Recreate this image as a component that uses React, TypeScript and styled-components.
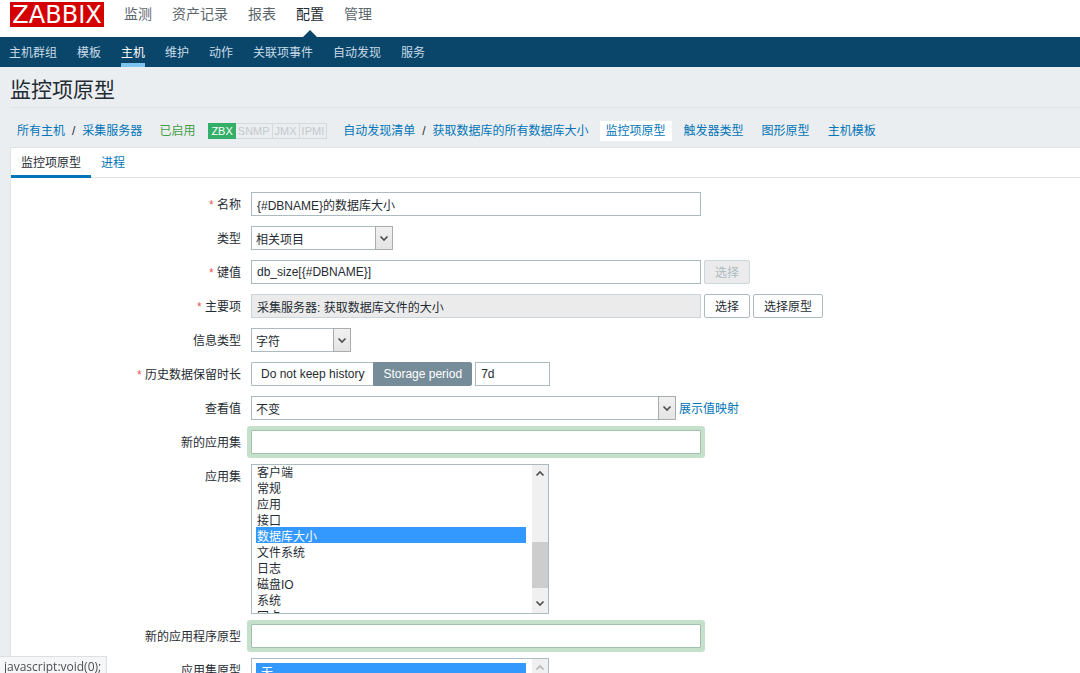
import React, { useEffect, useRef } from "react";
import styled, { createGlobalStyle, css } from "styled-components";

const GlobalStyle = createGlobalStyle`
  *, *::before, *::after { box-sizing: border-box; }
  html, body { margin: 0; height: 100%; overflow: hidden; }
  body {
    background: #ebeef0;
    color: #1f2c33;
    font-family: "Liberation Sans", Arial, "Noto Sans CJK SC", sans-serif;
    font-size: 12px;
    line-height: 16px;
  }
  input, select, button { font: inherit; color: inherit; margin: 0; }
  a { color: #0275b8; text-decoration: none; }
`;

const TopBar = styled.header`
  display: flex;
  align-items: flex-start;
  gap: 20px;
  height: 37px;
  padding: 2px 10px 0;
  background: #fff;
`;

const Logo = styled.a`
  width: 94px;
  height: 25px;
  background: #d40000;
  color: #fff;
  font-family: "DejaVu Sans", sans-serif;
  font-size: 24px;
  line-height: 26px;
  text-align: center;
`;

const MainMenu = styled.nav`
  display: flex;
  gap: 20px;
  height: 35px;
`;

const MainLink = styled.a<{ $active?: boolean }>`
  position: relative;
  color: ${(p) => (p.$active ? "#1f2c33" : "#5b666d")};
  font-size: 14px;
  line-height: 25px;
  ${(p) =>
    p.$active &&
    css`
      &::after {
        content: "";
        position: absolute;
        bottom: 0;
        left: 50%;
        margin-left: -7px;
        border: 7px solid transparent;
        border-top: 0;
        border-bottom-color: #0a466a;
      }
    `}
`;

const SubMenu = styled.nav`
  display: flex;
  gap: 20px;
  height: 30px;
  padding: 0 9px;
  background: #0a466a;
`;

const SubLink = styled.a<{ $active?: boolean }>`
  height: 30px;
  line-height: 32px;
  color: ${(p) => (p.$active ? "#fff" : "#c6dbe7")};
  border-bottom: 4px solid ${(p) => (p.$active ? "#7cc4ec" : "transparent")};
`;

const PageTitle = styled.h1`
  margin: 0 0 0 10px;
  height: 41px;
  border-bottom: 1px solid #dfe4e7;
  font-size: 21px;
  font-weight: 400;
  line-height: 46px;
`;

const Crumbs = styled.nav`
  display: flex;
  align-items: center;
  height: 39px;
  padding: 7px 10px 0 17px;
  white-space: nowrap;
`;

const CrumbGroup = styled.span`
  display: flex;
  gap: 7px;
  margin-right: 17px;
`;

const Enabled = styled.span`
  margin-right: 13px;
  color: #429e47;
`;

const Badges = styled.span`
  display: flex;
  margin-right: 16px;
`;

const Badge = styled.span<{ $on?: boolean }>`
  height: 16px;
  padding: 0 2px;
  border: 1px solid ${(p) => (p.$on ? "#34af67" : "#d3d9dc")};
  border-left-width: ${(p) => (p.$on ? "1px" : "0")};
  background: ${(p) => (p.$on ? "#34af67" : "transparent")};
  color: ${(p) => (p.$on ? "#fff" : "#c3cacf")};
  font-size: 11px;
  line-height: 15px;
`;

const Section = styled.a<{ $active?: boolean }>`
  margin-left: ${(p) => (p.$active ? "-6px" : "6px")};
  padding: 2px 6px;
  background: ${(p) => (p.$active ? "#fff" : "transparent")};
`;

const Panel = styled.main`
  margin-left: 10px;
  background: #fff;
  border: 1px solid #dfe4e7;
  border-right: 0;
`;

const Tabs = styled.div`
  display: flex;
  height: 30px;
  border-bottom: 1px solid #dfe4e7;
`;

const Tab = styled.button<{ $active?: boolean }>`
  height: 30px;
  padding: 2px 10px 0;
  border: 0;
  border-bottom: 3px solid ${(p) => (p.$active ? "#0275b8" : "transparent")};
  background: none;
  color: ${(p) => (p.$active ? "#1f2c33" : "#0275b8")};
`;

const Form = styled.form`
  display: grid;
  grid-template-columns: 230px 1fr;
  gap: 10px;
  padding: 14px 0 40px;
`;

const Label = styled.label<{ $required?: boolean }>`
  height: 24px;
  line-height: 26px;
  text-align: right;
  ${(p) =>
    p.$required &&
    css`
      &::before {
        content: "* ";
        color: #e45959;
      }
    `}
`;

const Field = styled.div`
  display: flex;
  align-items: flex-start;
  gap: 3px;
`;

const TextInput = styled.input<{ $width?: number; $fresh?: boolean }>`
  width: ${(p) => p.$width ?? 450}px;
  max-width: 100%;
  height: 24px;
  padding: 0 5px;
  border: 1px solid ${(p) => (p.$fresh ? "#a3bfae" : "#acbbc2")};
  background: #fff;
  outline: 0;
  ${(p) => p.$fresh && css`box-shadow: 0 0 0 4px #c5e1cb; border-radius: 1px;`}
  &:read-only {
    background: #ebebeb;
    border-color: #ccd5d9;
  }
`;

const Button = styled.button`
  height: 24px;
  padding: 2px 10px 0;
  border: 1px solid #acbbc2;
  border-radius: 2px;
  background: #fff;
  &:disabled {
    background: #ebebeb;
    border-color: #ccd5d9;
    color: #acbbc2;
  }
`;

const SelectBox = styled.span<{ $width: number }>`
  position: relative;
  width: ${(p) => p.$width}px;
  height: 24px;
  select {
    appearance: none;
    width: 100%;
    height: 24px;
    padding: 3px 20px 0 4px;
    border: 1px solid #acbbc2;
    border-radius: 0;
    background: #fff;
  }
`;

const DropArrow = styled.span`
  position: absolute;
  top: 0;
  right: 0;
  display: grid;
  place-items: center;
  width: 18px;
  height: 24px;
  border: 1px solid #a9adb0;
  background: linear-gradient(#f1f1f1, #e4e4e4);
  pointer-events: none;
`;

const Segments = styled.div`
  display: flex;
  label {
    height: 24px;
    padding: 0 9px;
    border: 1px solid #acbbc2;
    background: #fff;
    line-height: 22px;
    cursor: pointer;
  }
  input {
    position: absolute;
    opacity: 0;
  }
  label:first-of-type { border-right: 0; border-radius: 2px 0 0 2px; }
  label:last-of-type { border-radius: 0 2px 2px 0; }
  input:checked + label {
    background: #768d99;
    border-color: #768d99;
    color: #fff;
  }
`;

const MappingLink = styled.a`
  height: 24px;
  line-height: 26px;
`;

const ListFrame = styled.div`
  display: flex;
  width: 298px;
  height: 150px;
  border: 1px solid #acbbc2;
`;

const ListSelect = styled.select<{ $top: number }>`
  flex: 1;
  height: 100%;
  padding: ${(p) => p.$top}px 6px 0 4px;
  border: 0;
  background: #fff;
  outline: 0;
  overflow-y: scroll;
  scrollbar-width: none;
  option {
    height: 16px;
    min-height: 16px;
    padding: 0 1px;
    line-height: 16px;
  }
  option:checked {
    background: linear-gradient(#3399ff, #3399ff);
    -webkit-text-fill-color: #fff;
  }
`;

const ScrollTrack = styled.div`
  display: flex;
  flex-direction: column;
  align-items: center;
  justify-content: space-between;
  width: 16px;
  padding: 5px 0 6px;
  background: #f0f0f0;
`;

const ScrollThumb = styled.div`
  width: 16px;
  height: 46px;
  margin: 52px 0 0;
  background: #cdcdcd;
`;

const StatusTip = styled.div`
  position: fixed;
  left: 0;
  bottom: 0;
  height: 17px;
  padding: 0 5px 0 4px;
  border: 1px solid #dcdfe3;
  border-width: 1px 1px 0 0;
  background: #f5f6f8;
  color: #4b4f52;
  font-family: "Open Sans", "Noto Sans", sans-serif;
  line-height: 20px;
`;

function Chevron({ up, faded }: { up?: boolean; faded?: boolean }) {
  return (
    <svg width="10" height="7" viewBox="0 0 10 7" aria-hidden="true">
      <path
        d={up ? "M1.5 5.5 5 2 8.5 5.5" : "M1.5 1.5 5 5 8.5 1.5"}
        fill="none"
        stroke={faded ? "#b5b5b5" : "#505050"}
        strokeWidth="1.7"
      />
    </svg>
  );
}

function Dropdown({ id, value, width }: { id: string; value: string; width: number }) {
  return (
    <SelectBox $width={width}>
      <select id={id}>
        <option>{value}</option>
      </select>
      <DropArrow>
        <Chevron />
      </DropArrow>
    </SelectBox>
  );
}

interface ListBoxProps {
  id: string;
  options: string[];
  selected: string;
  top?: number;
  scrolled?: number;
}

function ListBox({ id, options, selected, top = 0, scrolled }: ListBoxProps) {
  const list = useRef<HTMLSelectElement>(null);
  useEffect(() => {
    const timer = setTimeout(() => {
      if (list.current && scrolled) list.current.scrollTop = scrolled;
    }, 30);
    return () => clearTimeout(timer);
  }, [scrolled]);
  return (
    <ListFrame>
      <ListSelect ref={list} id={id} multiple defaultValue={[selected]} $top={top}>
        {options.map((o) => (
          <option key={o}>{o}</option>
        ))}
      </ListSelect>
      <ScrollTrack>
        <Chevron up faded={!scrolled} />
        {scrolled && <ScrollThumb />}
        <Chevron faded={!scrolled} />
      </ScrollTrack>
    </ListFrame>
  );
}

const mainMenu = ["监测", "资产记录", "报表", "配置", "管理"];
const subMenu = ["主机群组", "模板", "主机", "维护", "动作", "关联项事件", "自动发现", "服务"];
const sections = ["监控项原型", "触发器类型", "图形原型", "主机模板"];
const applications = [
  "客户端", "常规", "应用", "接口", "数据库大小", "文件系统", "日志", "磁盘IO", "系统", "网卡",
];

export default function App() {
  return (
    <>
      <GlobalStyle />
      <TopBar>
        <Logo href="#">ZABBIX</Logo>
        <MainMenu>
          {mainMenu.map((m) => (
            <MainLink key={m} href="#" $active={m === "配置"}>{m}</MainLink>
          ))}
        </MainMenu>
      </TopBar>
      <SubMenu>
        {subMenu.map((m) => (
          <SubLink key={m} href="#" $active={m === "主机"}>{m}</SubLink>
        ))}
      </SubMenu>
      <PageTitle>监控项原型</PageTitle>
      <Crumbs>
        <CrumbGroup>
          <a href="#">所有主机</a>
          <span>/</span>
          <a href="#">采集服务器</a>
        </CrumbGroup>
        <Enabled>已启用</Enabled>
        <Badges>
          <Badge $on>ZBX</Badge>
          <Badge>SNMP</Badge>
          <Badge>JMX</Badge>
          <Badge>IPMI</Badge>
        </Badges>
        <CrumbGroup>
          <a href="#">自动发现清单</a>
          <span>/</span>
          <a href="#">获取数据库的所有数据库大小</a>
        </CrumbGroup>
        {sections.map((s, i) => (
          <Section key={s} href="#" $active={i === 0}>{s}</Section>
        ))}
      </Crumbs>
      <Panel>
        <Tabs>
          <Tab type="button" $active>监控项原型</Tab>
          <Tab type="button">进程</Tab>
        </Tabs>
        <Form>
          <Label htmlFor="name" $required>名称</Label>
          <Field>
            <TextInput id="name" defaultValue="{#DBNAME}的数据库大小" />
          </Field>

          <Label htmlFor="type">类型</Label>
          <Field>
            <Dropdown id="type" value="相关项目" width={142} />
          </Field>

          <Label htmlFor="key" $required>键值</Label>
          <Field>
            <TextInput id="key" defaultValue="db_size[{#DBNAME}]" />
            <Button type="button" disabled>选择</Button>
          </Field>

          <Label htmlFor="master" $required>主要项</Label>
          <Field>
            <TextInput id="master" readOnly value="采集服务器: 获取数据库文件的大小" />
            <Button type="button">选择</Button>
            <Button type="button">选择原型</Button>
          </Field>

          <Label htmlFor="info">信息类型</Label>
          <Field>
            <Dropdown id="info" value="字符" width={100} />
          </Field>

          <Label htmlFor="history" $required>历史数据保留时长</Label>
          <Field>
            <Segments>
              <input type="radio" name="mode" id="mode-off" />
              <label htmlFor="mode-off">Do not keep history</label>
              <input type="radio" name="mode" id="mode-on" defaultChecked />
              <label htmlFor="mode-on">Storage period</label>
            </Segments>
            <TextInput id="history" defaultValue="7d" $width={75} />
          </Field>

          <Label htmlFor="view">查看值</Label>
          <Field>
            <Dropdown id="view" value="不变" width={425} />
            <MappingLink href="#">展示值映射</MappingLink>
          </Field>

          <Label htmlFor="new-app">新的应用集</Label>
          <Field>
            <TextInput id="new-app" $fresh />
          </Field>

          <Label htmlFor="apps">应用集</Label>
          <Field>
            <ListBox id="apps" options={applications} selected="数据库大小" scrolled={2} />
          </Field>

          <Label htmlFor="new-proto">新的应用程序原型</Label>
          <Field>
            <TextInput id="new-proto" $fresh />
          </Field>

          <Label htmlFor="protos">应用集原型</Label>
          <Field>
            <ListBox id="protos" options={["-无-"]} selected="-无-" top={4} />
          </Field>
        </Form>
      </Panel>
      <StatusTip>javascript:void(0);</StatusTip>
    </>
  );
}
